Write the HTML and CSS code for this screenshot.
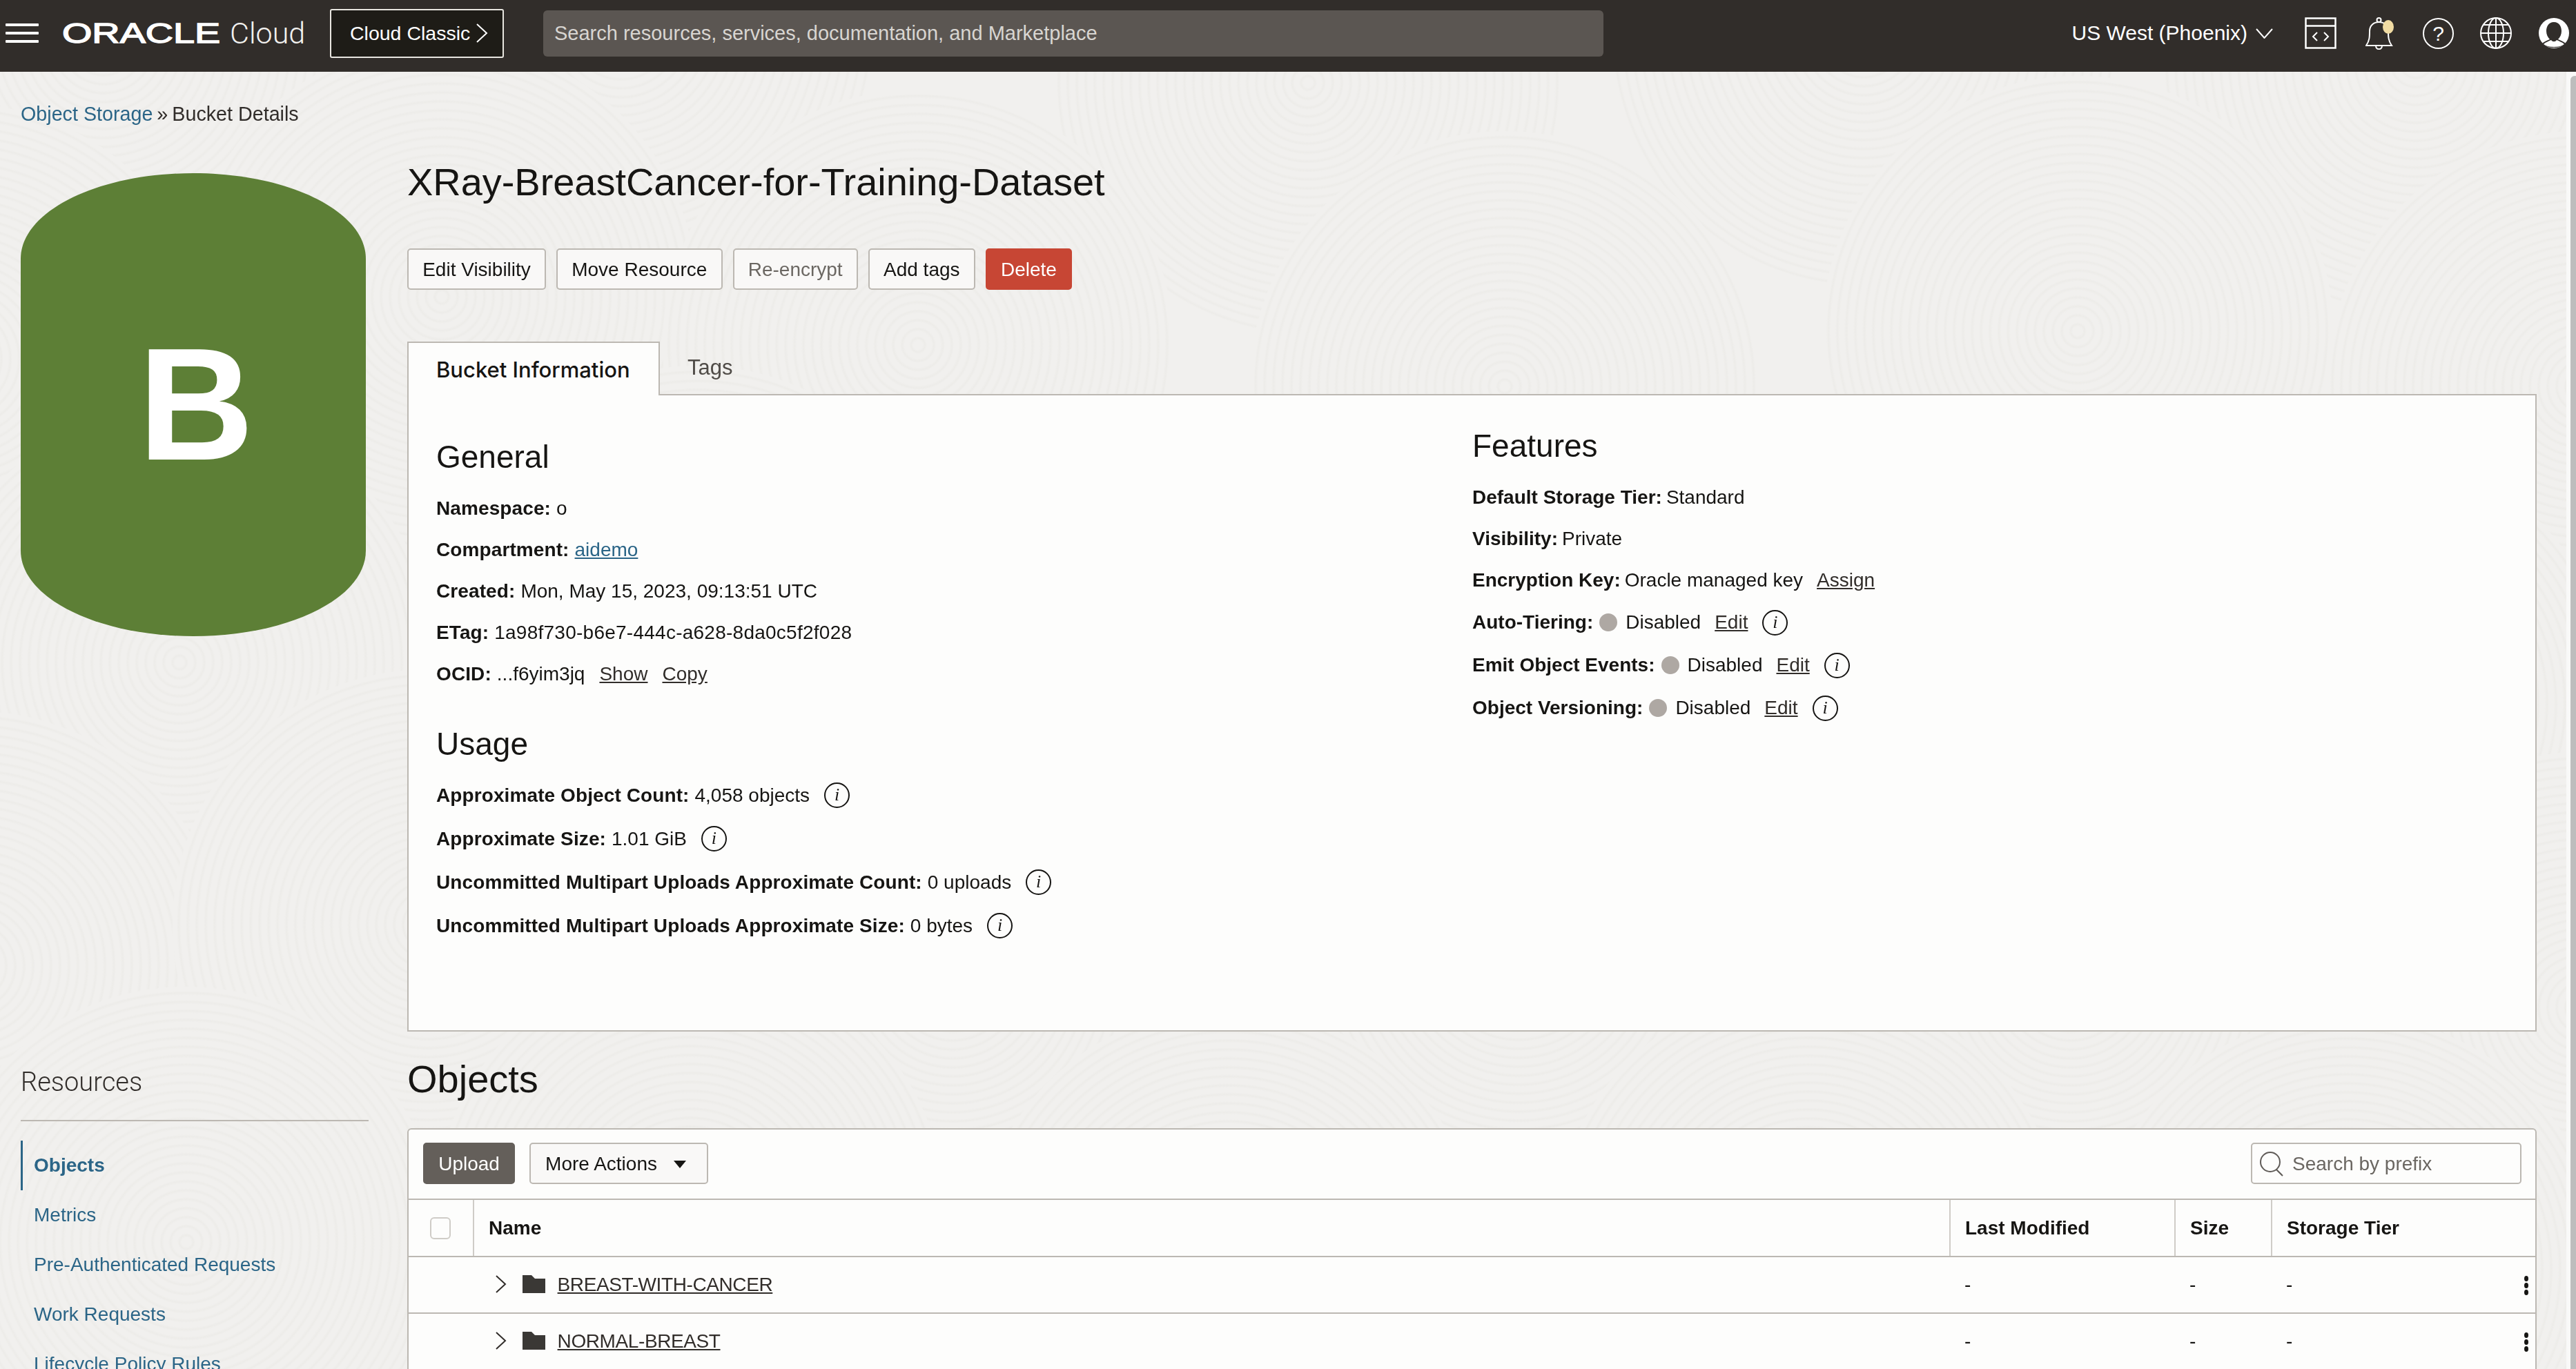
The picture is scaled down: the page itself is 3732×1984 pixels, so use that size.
FILE: index.html
```html
<!DOCTYPE html>
<html lang="en">
<head>
<meta charset="UTF-8">
<title>Bucket Details</title>
<link rel="stylesheet" href="styles.css">
</head>
<body>

<!-- fingerprint texture under the page -->
<svg class="texture" width="3732" height="1984" aria-hidden="true">
  <defs>
    <radialGradient id="ringFill" gradientUnits="userSpaceOnUse" cx="0" cy="0" r="13" spreadMethod="repeat">
      <stop offset="0" stop-color="#f1f0ee"/>
      <stop offset="0.5" stop-color="#f1f0ee"/>
      <stop offset="0.78" stop-color="#edece9"/>
      <stop offset="1" stop-color="#f1f0ee"/>
    </radialGradient>
    <circle id="rings" r="370" fill="url(#ringFill)"/>
  </defs>
  <rect width="3732" height="1984" fill="#f1f0ee"/>
  <use href="#rings" x="150" y="60"/>
  <use href="#rings" x="900" y="40"/>
  <use href="#rings" x="1895" y="120"/>
  <use href="#rings" x="2700" y="50"/>
  <use href="#rings" x="3500" y="90"/>
  <use href="#rings" x="-60" y="520"/>
  <use href="#rings" x="640" y="430"/>
  <use href="#rings" x="1330" y="500"/>
  <use href="#rings" x="2180" y="560"/>
  <use href="#rings" x="3010" y="480"/>
  <use href="#rings" x="3740" y="560"/>
  <use href="#rings" x="260" y="960"/>
  <use href="#rings" x="1010" y="900"/>
  <use href="#rings" x="1750" y="1000"/>
  <use href="#rings" x="2600" y="950"/>
  <use href="#rings" x="3420" y="1020"/>
  <use href="#rings" x="-40" y="1400"/>
  <use href="#rings" x="620" y="1340"/>
  <use href="#rings" x="1380" y="1420"/>
  <use href="#rings" x="2200" y="1380"/>
  <use href="#rings" x="3000" y="1420"/>
  <use href="#rings" x="3740" y="1460"/>
  <use href="#rings" x="270" y="1800"/>
  <use href="#rings" x="1000" y="1760"/>
  <use href="#rings" x="1780" y="1830"/>
  <use href="#rings" x="2620" y="1800"/>
  <use href="#rings" x="3400" y="1840"/>
</svg>

<header class="topbar">
  <div class="hamburger"><span></span><span></span><span></span></div>
  <span class="oracle-logo">ORACLE</span>
  <span class="cloud-word">Cloud</span>
  <button class="classic-btn">Cloud Classic
    <svg width="17" height="28" viewBox="0 0 17 28"><path d="M1 1 L15 14 L1 27" fill="none" stroke="#fff" stroke-width="2"/></svg>
  </button>
  <div class="global-search">Search resources, services, documentation, and Marketplace</div>
  <div class="top-right">
    <span class="region">US West (Phoenix)</span>
    <svg class="region-caret" width="25" height="15" viewBox="0 0 25 15"><path d="M1 1 L12.5 14 L24 1" fill="none" stroke="#fff" stroke-width="2"/></svg>
    <svg class="icon-code" width="46" height="46" viewBox="0 0 46 46" fill="none" stroke="#fff" stroke-width="2.5">
      <rect x="1.5" y="1.5" width="43" height="43"/>
      <path d="M1.5 12.5 H44.5"/>
      <path d="M18 22 L12 28 L18 34 M28 22 L34 28 L28 34" stroke-width="2"/>
    </svg>
    <svg class="icon-bell" width="42" height="47" viewBox="0 0 42 47" fill="none" stroke="#fff" stroke-width="2">
      <path d="M1 41 H38 C33 34 33 28 33 20 C33 12 27 7 19.5 7 C12 7 6 12 6 20 C6 28 6 34 1 41 Z"/>
      <circle cx="19.5" cy="4" r="3"/>
      <path d="M15 41 C15 48 24 48 24 41"/>
      <ellipse cx="33" cy="14" rx="8" ry="10" fill="#f1dca3" stroke="none"/>
    </svg>
    <svg class="icon-help" width="45" height="45" viewBox="0 0 45 45">
      <circle cx="22.5" cy="22.5" r="21.5" fill="none" stroke="#fff" stroke-width="2"/>
      <text x="22.5" y="33" text-anchor="middle">?</text>
    </svg>
    <svg class="icon-globe" width="46" height="46" viewBox="0 0 46 46" fill="none" stroke="#fff" stroke-width="2">
      <circle cx="23" cy="23" r="22"/>
      <ellipse cx="23" cy="23" rx="11" ry="22"/>
      <path d="M23 1 V45 M1 23 H45 M5 11 H41 M5 35 H41"/>
    </svg>
    <svg class="icon-user" width="44" height="44" viewBox="0 0 44 44">
      <circle cx="22" cy="22" r="22" fill="#fff"/>
      <path d="M22 6 C30 6 33 13 33 19 C33 24 31 28 28 31 C33 33 37 35 39 37 C35 41 29 43 22 43 C15 43 9 41 5 37 C7 35 11 33 16 31 C13 28 11 24 11 19 C11 13 14 6 22 6 Z" fill="#312d2a"/>
      <path d="M7 38 C10 35 14 34 18 32 C20 35 24 35 26 32 C30 34 34 35 37 38 C33 41 28 42 22 42 C16 42 11 41 7 38 Z" fill="#fff"/>
    </svg>
  </div>
</header>

<div class="shell">
  <div class="page">
    <aside class="sidebar">
      <div class="breadcrumb"><a class="blue" href="#">Object Storage</a><span class="crumb-sep">»</span>Bucket Details</div>
      <div class="bucket-badge">
        <svg width="500" height="671" viewBox="0 0 500 671"><path d="M0 124 C0 55 112 0 250 0 C388 0 500 55 500 124 V547 C500 616 388 671 250 671 C112 671 0 616 0 547 Z" fill="#5d7f36"/></svg>
        <span class="badge-letter">B</span>
      </div>
      <div class="resources">
        <h3 class="resources-title">Resources</h3>
        <nav class="side-nav">
          <a class="side-link side-link-active" href="#">Objects</a>
          <a class="side-link" href="#">Metrics</a>
          <a class="side-link" href="#">Pre-Authenticated Requests</a>
          <a class="side-link" href="#">Work Requests</a>
          <a class="side-link" href="#">Lifecycle Policy Rules</a>
        </nav>
      </div>
    </aside>

    <main class="main">
      <h1 class="page-title">XRay-BreastCancer-for-Training-Dataset</h1>
      <div class="actions">
        <button class="btn">Edit Visibility</button>
        <button class="btn">Move Resource</button>
        <button class="btn btn-disabled">Re-encrypt</button>
        <button class="btn">Add tags</button>
        <button class="btn btn-danger">Delete</button>
      </div>

      <div class="tabs">
        <div class="tab tab-active">Bucket Information</div>
        <div class="tab">Tags</div>
      </div>
      <section class="panel">
        <div class="col col-left">
          <h2 class="sub-title">General</h2>
          <div class="row"><b>Namespace:</b><span class="val">o</span></div>
          <div class="row"><b>Compartment:</b><a class="val blue-link" href="#">aidemo</a></div>
          <div class="row"><b>Created:</b><span class="val">Mon, May 15, 2023, 09:13:51 UTC</span></div>
          <div class="row"><b>ETag:</b><span class="val etag">1a98f730-b6e7-444c-a628-8da0c5f2f028</span></div>
          <div class="row"><b>OCID:</b><span class="val">...f6yim3jq</span><a class="act" href="#">Show</a><a class="act" href="#">Copy</a></div>

          <h2 class="sub-title usage-title">Usage</h2>
          <div class="row row-info"><b>Approximate Object Count:</b><span class="val">4,058 objects</span><i class="info">i</i></div>
          <div class="row row-info"><b>Approximate Size:</b><span class="val">1.01 GiB</span><i class="info">i</i></div>
          <div class="row row-info"><b>Uncommitted Multipart Uploads Approximate Count:</b><span class="val">0 uploads</span><i class="info">i</i></div>
          <div class="row row-info"><b>Uncommitted Multipart Uploads Approximate Size:</b><span class="val">0 bytes</span><i class="info">i</i></div>
        </div>
        <div class="col col-right">
          <h2 class="sub-title">Features</h2>
          <div class="row"><b>Default Storage Tier:</b><span class="val">Standard</span></div>
          <div class="row"><b>Visibility:</b><span class="val">Private</span></div>
          <div class="row"><b>Encryption Key:</b><span class="val">Oracle managed key</span><a class="act" href="#">Assign</a></div>
          <div class="row row-status"><b>Auto-Tiering:</b><span class="dot"></span><span>Disabled</span><a class="act" href="#">Edit</a><i class="info">i</i></div>
          <div class="row row-status"><b>Emit Object Events:</b><span class="dot"></span><span>Disabled</span><a class="act" href="#">Edit</a><i class="info">i</i></div>
          <div class="row row-status"><b>Object Versioning:</b><span class="dot"></span><span>Disabled</span><a class="act" href="#">Edit</a><i class="info">i</i></div>
        </div>
      </section>

      <h2 class="objects-title">Objects</h2>
      <section class="card">
        <div class="toolbar">
          <button class="btn btn-primary">Upload</button>
          <button class="btn btn-more">More Actions<span class="caret"></span></button>
          <div class="prefix-search">
            <svg width="36" height="36" viewBox="0 0 36 36" fill="none" stroke="#5f5b57" stroke-width="2"><ellipse cx="15" cy="15" rx="14" ry="14"/><path d="M24 26 L33 35"/></svg>
            <span>Search by prefix</span>
          </div>
        </div>
        <table class="objects-table">
          <thead>
            <tr>
              <th class="col-check"><span class="checkbox"></span></th>
              <th class="col-name">Name</th>
              <th class="col-modified">Last Modified</th>
              <th class="col-size">Size</th>
              <th>Storage Tier</th>
            </tr>
          </thead>
          <tbody>
            <tr>
              <td></td>
              <td class="name-cell">
                <svg class="chev" width="16" height="26" viewBox="0 0 16 26"><path d="M1 1 L14 13 L1 25" fill="none" stroke="#312d2a" stroke-width="2"/></svg>
                <svg class="folder" width="33" height="26" viewBox="0 0 33 26"><path d="M0 0 H13 L18 5 H33 V26 H0 Z" fill="#3a3835"/></svg>
                <a href="#">BREAST-WITH-CANCER</a>
              </td>
              <td>-</td>
              <td>-</td>
              <td class="tier-cell">-<svg class="kebab" width="8" height="28" viewBox="0 0 8 28"><ellipse cx="4" cy="4" rx="3" ry="4"/><ellipse cx="4" cy="14" rx="3" ry="4"/><ellipse cx="4" cy="24" rx="3" ry="4"/></svg></td>
            </tr>
            <tr>
              <td></td>
              <td class="name-cell">
                <svg class="chev" width="16" height="26" viewBox="0 0 16 26"><path d="M1 1 L14 13 L1 25" fill="none" stroke="#312d2a" stroke-width="2"/></svg>
                <svg class="folder" width="33" height="26" viewBox="0 0 33 26"><path d="M0 0 H13 L18 5 H33 V26 H0 Z" fill="#3a3835"/></svg>
                <a href="#">NORMAL-BREAST</a>
              </td>
              <td>-</td>
              <td>-</td>
              <td class="tier-cell">-<svg class="kebab" width="8" height="28" viewBox="0 0 8 28"><ellipse cx="4" cy="4" rx="3" ry="4"/><ellipse cx="4" cy="14" rx="3" ry="4"/><ellipse cx="4" cy="24" rx="3" ry="4"/></svg></td>
            </tr>
          </tbody>
        </table>
      </section>
    </main>
  </div>
  <div class="scrollbar"><div class="scroll-thumb"></div></div>
</div>

</body>
</html>
```

FILE: styles.css
```css
html, body {
  margin: 0;
  padding: 0;
  height: 100%;
  overflow: hidden;
}

body {
  font-family: "Liberation Sans", Arial, sans-serif;
  font-size: 28px;
  color: #161513;
  background: #f1f0ee;
}

h1, h2, h3 {
  margin: 0;
  font-weight: 400;
}

button {
  font-family: inherit;
}

a {
  color: inherit;
}

.texture {
  position: fixed;
  left: 0;
  top: 0;
  z-index: -1;
}

/* top bar */
.topbar {
  display: flex;
  align-items: center;
  height: 104px;
  padding: 0 10px 0 8px;
  background: #312d2a;
  color: #fff;
}

.hamburger {
  display: flex;
  flex-direction: column;
  justify-content: space-between;
  width: 48px;
  height: 28px;
  margin-right: 34px;
  margin-bottom: 8px;
}

.hamburger span {
  display: block;
  height: 4px;
  background: #fff;
  border-radius: 1px;
}

/* wordmark is Arial stretched wide, keeps it as real text */
.oracle-logo {
  display: block;
  width: 229px;
  margin-right: 14px;
  margin-bottom: 8px;
  font-size: 41px;
  line-height: 44px;
  white-space: nowrap;
  -webkit-text-stroke: 1.4px #fff;
  transform: scaleX(1.36);
  transform-origin: left center;
}

.cloud-word {
  font-family: Roboto, "Liberation Sans", sans-serif;
  font-weight: 300;
  font-size: 43px;
  width: 145px;
  margin-bottom: 8px;
  color: #f2f1ef;
}

.classic-btn {
  display: flex;
  align-items: center;
  gap: 9px;
  box-sizing: border-box;
  width: 252px;
  height: 71px;
  padding: 0 0 0 27px;
  margin-bottom: 8px;
  background: #1e1c17;
  border: 2px solid #e8e6e0;
  border-radius: 3px;
  color: #fff;
  font-size: 28.5px;
}

.global-search {
  display: flex;
  align-items: center;
  box-sizing: border-box;
  width: 1536px;
  height: 67px;
  margin: 0 0 8px 57px;
  padding-left: 16px;
  background: #5b5652;
  border-radius: 6px;
  color: #d8d5d1;
  font-size: 29px;
}

.top-right {
  display: flex;
  align-items: center;
  margin-left: auto;
  margin-bottom: 8px;
}

.region {
  font-size: 30px;
  margin-right: 12px;
}

.region-caret {
  margin-right: 46px;
}

.icon-code {
  margin-right: 42px;
}

.icon-bell {
  margin-right: 41px;
}

.icon-help {
  margin-right: 38px;
}

.icon-help text {
  font-size: 30px;
  fill: #fff;
}

.icon-globe {
  margin-right: 39px;
}

/* page layout */
.shell {
  display: flex;
  height: 1880px;
}

.page {
  display: flex;
  flex: 1;
  gap: 56px;
  padding: 0 43px 0 30px;
  min-width: 0;
}

.scrollbar {
  display: flex;
  justify-content: flex-end;
  width: 14px;
  padding-top: 6px;
  background: #f9f9f8;
}

.scroll-thumb {
  width: 8px;
  height: 100%;
  background: #bdbdbd;
  border-radius: 6px 0 0 0;
}

/* left column */
.sidebar {
  width: 504px;
  flex-shrink: 0;
}

.breadcrumb {
  height: 34px;
  margin-top: 44px;
  line-height: 34px;
  font-size: 28.7px;
  color: #312d2a;
  white-space: nowrap;
}

.blue {
  color: #2b6587;
  text-decoration: none;
}

.crumb-sep {
  margin: 0 6px;
}

.bucket-badge {
  position: relative;
  width: 500px;
  height: 671px;
  margin-top: 69px;
}

.bucket-badge svg {
  display: block;
}

.badge-letter {
  position: absolute;
  left: 8px;
  right: 0;
  top: 199px;
  text-align: center;
  font-size: 232px;
  font-weight: 700;
  line-height: 271px;
  color: #fff;
}

.resources {
  margin-top: 624px;
}

.resources-title {
  height: 44px;
  line-height: 44px;
  font-family: Roboto, "Liberation Sans", sans-serif;
  font-weight: 300;
  font-size: 38px;
  color: #312d2a;
  padding-bottom: 33px;
  border-bottom: 2px solid #bcb8b2;
}

.side-nav {
  display: flex;
  flex-direction: column;
  margin-top: 28px;
}

.side-link {
  display: flex;
  align-items: center;
  flex-shrink: 0;
  height: 72px;
  padding-left: 16px;
  color: #2b6587;
  text-decoration: none;
  border-left: 3px solid transparent;
  white-space: nowrap;
}

.side-link-active {
  font-weight: 700;
  border-left-color: #2b6587;
}

/* main column */
.main {
  flex: 1;
  min-width: 0;
}

.page-title {
  height: 68px;
  margin-top: 126px;
  font-size: 56px;
  line-height: 68px;
  letter-spacing: -0.05px;
}

.actions {
  display: flex;
  gap: 15px;
  margin-top: 62px;
}

.btn {
  box-sizing: border-box;
  height: 60px;
  padding: 2px 20.2px 0;
  background: #f9f8f7;
  border: 2px solid #bcb8b2;
  border-radius: 5px;
  color: #161513;
  font-size: 28px;
  white-space: nowrap;
}

.btn-disabled {
  color: #6b6762;
}

.btn-danger {
  background: #c74634;
  border-color: #c74634;
  color: #fff;
}

.btn-primary {
  background: #645f5a;
  border-color: #645f5a;
  color: #fff;
}

.btn-more {
  display: flex;
  align-items: center;
}

.caret {
  width: 0;
  height: 0;
  margin: 0 9px 0 24px;
  border-left: 9px solid transparent;
  border-right: 9px solid transparent;
  border-top: 11px solid #161513;
}

.tabs {
  display: flex;
  margin-top: 75px;
}

.tab {
  display: flex;
  align-items: center;
  height: 76px;
  padding: 0 40px;
  font-size: 31px;
  color: #4f4b47;
}

.tab-active {
  position: relative;
  margin-bottom: -2px;
  padding: 0 40px 0;
  box-sizing: content-box;
  width: 282px;
  background: #fdfdfc;
  border: 2px solid #bcb8b2;
  border-bottom: none;
  font-family: Inter, "Liberation Sans", sans-serif;
  font-weight: 500;
  font-size: 31px;
  color: #161513;
  white-space: nowrap;
  z-index: 1;
}

.panel {
  display: flex;
  box-sizing: border-box;
  height: 924px;
  background: #fdfdfc;
  border: 2px solid #bcb8b2;
}

.col-left {
  width: 1501px;
  padding: 61px 0 0 40px;
  box-sizing: content-box;
}

.col-left b {
  letter-spacing: 0.1px;
}

.col-right {
  padding-top: 45px;
}

.col-right .val {
  margin-left: 6px;
}

.col-right .act {
  margin-left: 20px;
}

.sub-title {
  height: 56px;
  line-height: 56px;
  font-size: 46px;
  margin-bottom: 17px;
}

.usage-title {
  margin-top: 43px;
  margin-bottom: 15px;
}

.row {
  display: flex;
  align-items: center;
  height: 60px;
  white-space: nowrap;
}

.row-info {
  height: 63px;
}

.row-status {
  height: 62px;
}

.val {
  margin-left: 8px;
}

.etag {
  letter-spacing: 0.25px;
}

.blue-link {
  color: #2b6587;
}

.act {
  margin-left: 21px;
  color: #312d2a;
}

.info {
  display: block;
  box-sizing: border-box;
  width: 37px;
  height: 37px;
  margin-left: 21px;
  border: 2px solid #161513;
  border-radius: 50%;
  font-family: "Liberation Serif", serif;
  font-style: italic;
  font-size: 26px;
  line-height: 32px;
  text-align: center;
}

.dot {
  width: 26px;
  height: 26px;
  margin: 0 12px 0 9px;
  background: #aea8a3;
  border-radius: 50%;
}

/* objects table */
.objects-title {
  height: 68px;
  margin-top: 35px;
  margin-bottom: 37px;
  font-size: 56px;
  line-height: 68px;
}

.card {
  background: #fdfdfc;
  border: 2px solid #bcb8b2;
  border-radius: 6px 6px 0 0;
}

.toolbar {
  display: flex;
  align-items: center;
  gap: 21px;
  box-sizing: border-box;
  height: 102px;
  padding: 0 20px 2px 21px;
  border-bottom: 2px solid #bcb8b2;
}

.btn-more {
  padding: 2px 21px 0;
}

.prefix-search {
  display: flex;
  align-items: center;
  gap: 11px;
  box-sizing: border-box;
  width: 392px;
  height: 60px;
  margin-left: auto;
  padding: 2px 0 0 11px;
  background: #fdfdfc;
  border: 2px solid #bcb8b2;
  border-radius: 5px;
  color: #6b6762;
}

.objects-table {
  width: 100%;
  border-collapse: collapse;
  table-layout: fixed;
}

.objects-table th {
  box-sizing: border-box;
  height: 82px;
  padding: 0 0 0 21px;
  text-align: left;
  font-size: 28px;
  border-left: 2px solid #cfccc7;
  border-bottom: 2px solid #bcb8b2;
}

.objects-table th:first-child {
  border-left: none;
}

.objects-table td {
  box-sizing: border-box;
  height: 82px;
  padding: 0 0 0 21px;
  border-bottom: 2px solid #bcb8b2;
}

.col-check {
  width: 94px;
}

.col-name {
  width: 2139px;
}

.col-modified {
  width: 326px;
}

.col-size {
  width: 140px;
}

.checkbox {
  display: block;
  box-sizing: border-box;
  width: 30px;
  height: 32px;
  margin-left: 10px;
  border: 2px solid #cfccc7;
  border-radius: 6px;
}

.name-cell {
  white-space: nowrap;
}

.name-cell a {
  color: #312d2a;
  letter-spacing: -0.4px;
}

.chev {
  margin-left: 11px;
  margin-right: 15px;
  vertical-align: -3px;
}

.folder {
  margin-right: 10px;
  vertical-align: -3px;
}

.tier-cell {
  position: relative;
}

.kebab {
  position: absolute;
  right: 9px;
  top: 27px;
  fill: #161513;
}
```
